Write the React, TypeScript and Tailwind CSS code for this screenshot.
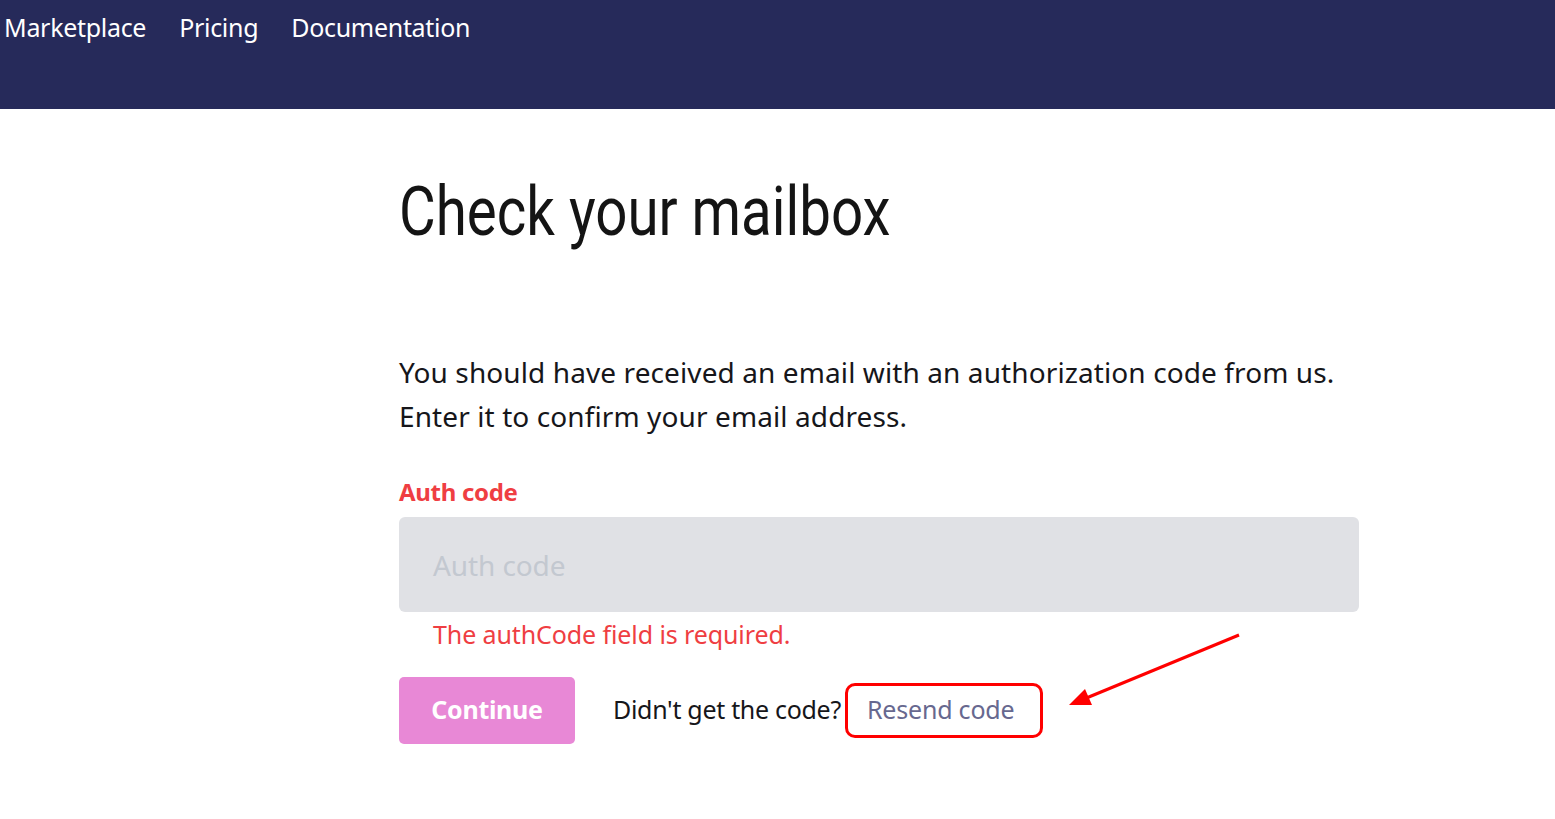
export default function App() {
  return (
    <div className="min-h-screen bg-white text-[#16161a]" style={{ fontFamily: '"Noto Sans", "Open Sans", sans-serif' }}>
      <nav className="h-[109px] bg-[#262a5a] flex items-start gap-[33px] px-[4px] pt-[9px] text-white text-[25px] tracking-[-0.3px]">
        <a>Marketplace</a>
        <a>Pricing</a>
        <a>Documentation</a>
      </nav>

      <main className="w-[960px] ml-[399px] pt-[63px] relative">
        <h1
          className="text-[68px] leading-[80px] text-[#141414] origin-left scale-x-[0.83] whitespace-nowrap"
          style={{ fontFamily: 'Roboto, sans-serif' }}
        >
          Check your mailbox
        </h1>

        <p className="mt-[98px] text-[28px] leading-[44px] tracking-[0.1px]">
          You should have received an email with an authorization code from us.
          <br />
          Enter it to confirm your email address.
        </p>

        <label className="block mt-[36px] text-[24px] font-bold text-[#ef3e42] tracking-[-0.3px]">Auth code</label>
        <div className="mt-[7px] h-[95px] rounded-[6px] bg-[#e0e1e5] flex items-center px-[34px] text-[28px] text-[#c3c8d0] tracking-[-0.1px]">
          Auth code
        </div>
        <p className="mt-[4px] pl-[34px] text-[25px] text-[#ef3e42] tracking-[-0.1px]">The authCode field is required.</p>

        <div className="mt-[23px] flex items-center">
          <button className="w-[176px] h-[67px] rounded-[5px] bg-[#e888d6] text-white text-[25px] font-bold tracking-[-0.3px]">
            Continue
          </button>
          <span className="ml-[38px] text-[25px] tracking-[-0.3px]">Didn't get the code?</span>
          <span className="ml-[4px] relative h-[55px] w-[198px] rounded-[10px] border-[3px] border-[#ff0000] flex items-center pl-[19px] text-[25px] text-[#67688f] tracking-[-0.2px]">
            Resend code
          </span>
        </div>

        <svg className="absolute left-[660px] top-[518px]" width="190" height="80" viewBox="0 0 190 80">
          <line x1="180" y1="8" x2="25" y2="72" stroke="#ff0000" strokeWidth="3" />
          <polygon points="10,78 26,62 33,78" fill="#ff0000" />
        </svg>
      </main>
    </div>
  );
}
